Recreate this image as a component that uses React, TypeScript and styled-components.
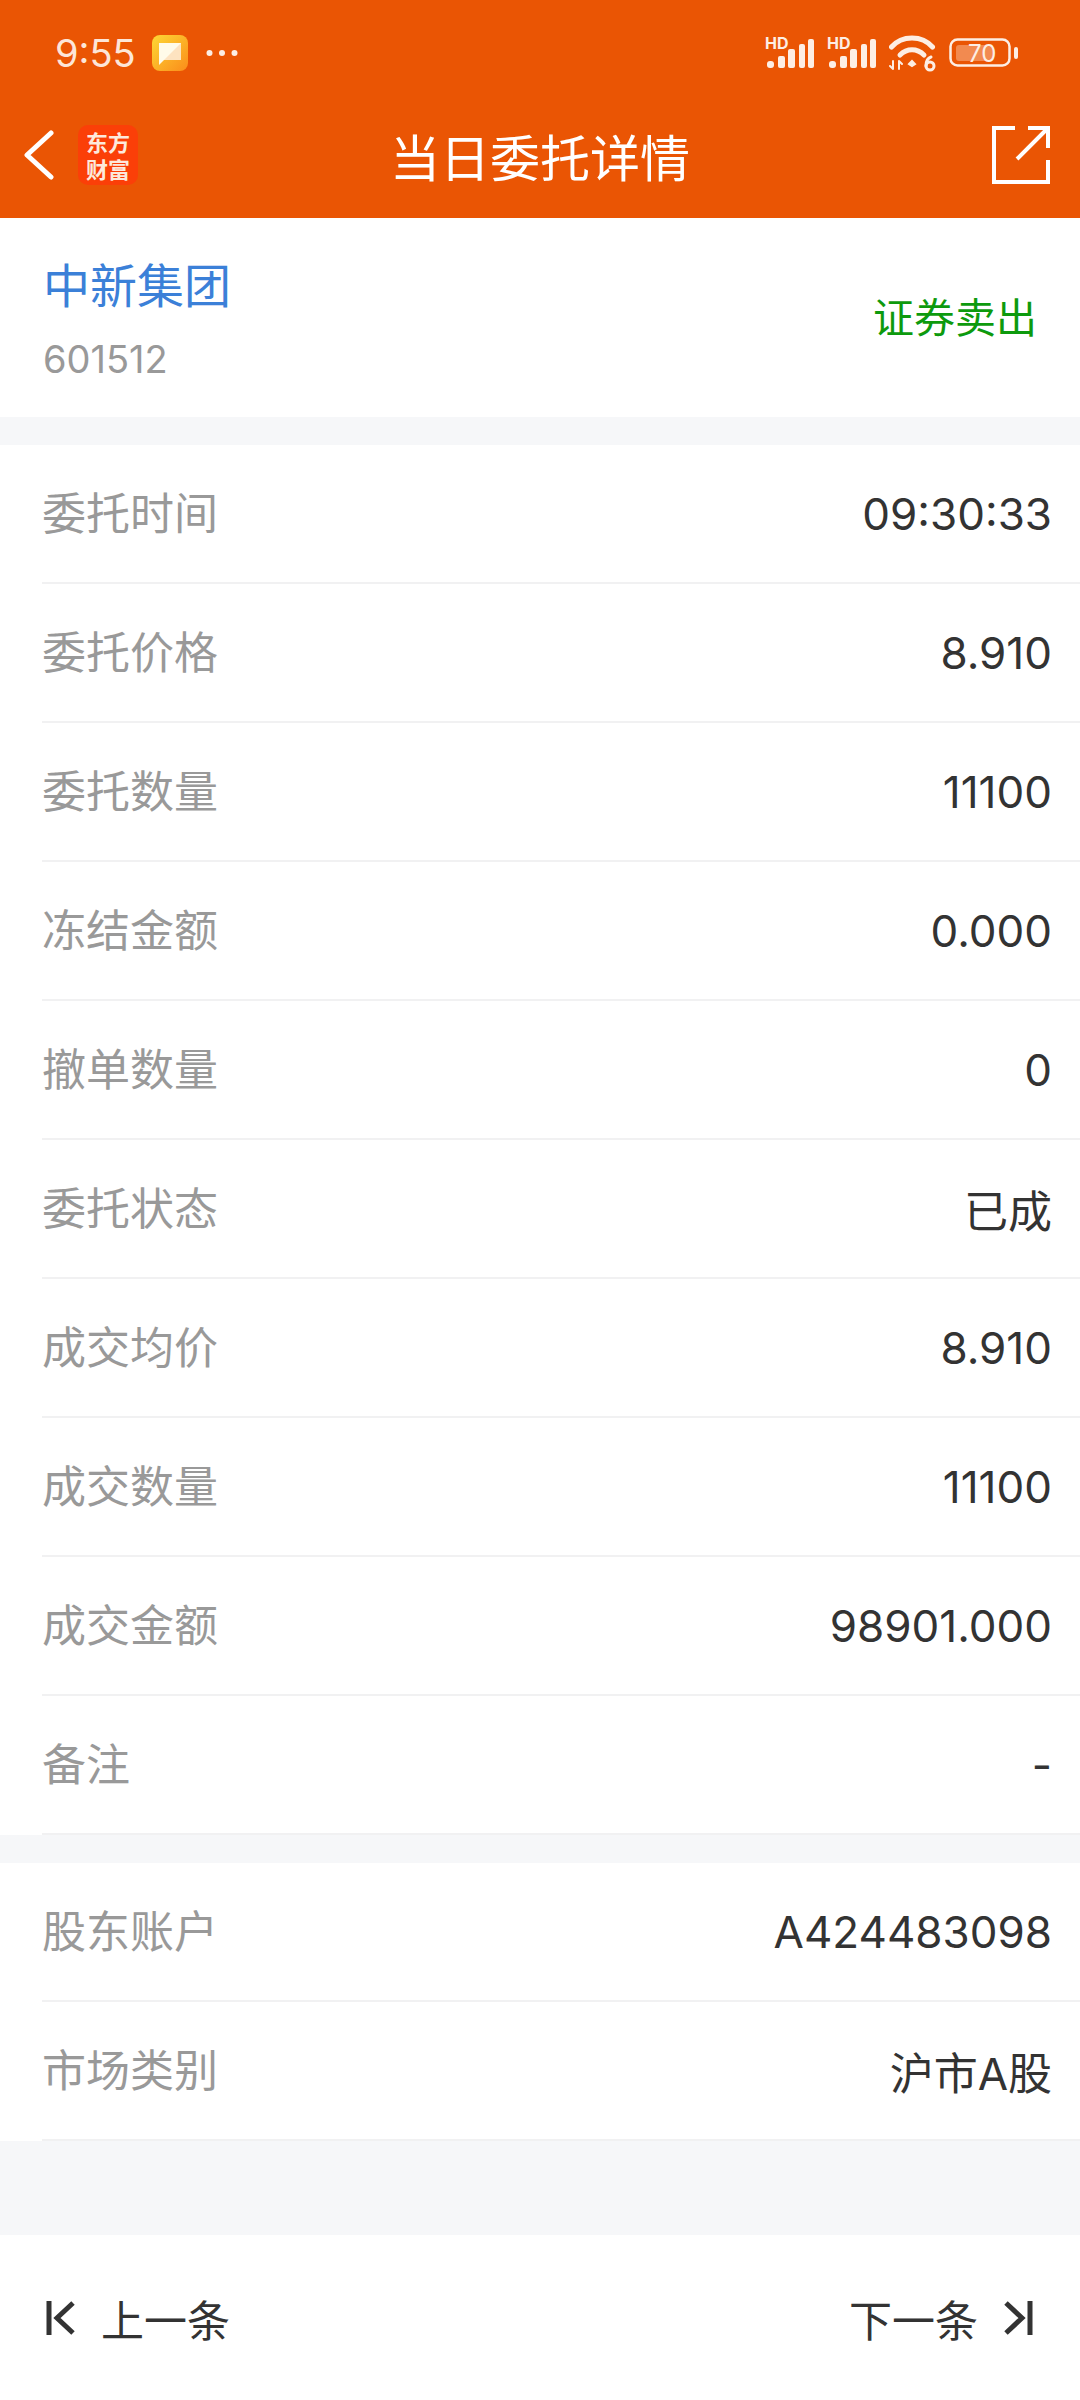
import styled, { createGlobalStyle } from 'styled-components';

const GlobalStyle = createGlobalStyle`
  html, body { margin: 0; padding: 0; background: #f6f7f9; }
  body { font-family: Inter, "Noto Sans CJK SC", sans-serif; }
`;

const Page = styled.div`
  width: 1080px;
  height: 2400px;
  display: flex;
  flex-direction: column;
  background: #f6f7f9;
  overflow: hidden;
`;

const Header = styled.header`
  height: 218px;
  background: #ea5504;
  display: flex;
  flex-direction: column;
  flex-shrink: 0;
`;

const StatusBar = styled.div`
  height: 106px;
  display: flex;
  align-items: center;
  justify-content: space-between;
  padding: 0 62px 0 55px;
`;

const StatusLeft = styled.div`
  display: flex;
  align-items: center;
`;

const Clock = styled.span`
  font-family: Inter, sans-serif;
  font-size: 38px;
  width: 97px;
  color: #fde6d8;
`;

const NotifyIcon = styled.svg`
  width: 36px;
  height: 36px;
`;

const MoreDots = styled.svg`
  width: 32px;
  height: 8px;
  margin-left: 18px;
`;

const StatusRight = styled.div`
  display: flex;
  align-items: center;
  gap: 12px;
`;

const NavBar = styled.div`
  height: 98px;
  display: flex;
  align-items: center;
  justify-content: space-between;
  padding: 0 30px 0 24px;
  position: relative;
`;

const NavLeft = styled.div`
  display: flex;
  align-items: center;
  gap: 24px;
`;

const LogoBadge = styled.div`
  width: 60px;
  height: 60px;
  border-radius: 10px;
  background: #fb3f08;
  color: #fde9dc;
  font-family: "Noto Sans CJK SC", sans-serif;
  font-size: 22px;
  font-weight: 700;
  line-height: 27px;
  display: flex;
  align-items: center;
  justify-content: center;
  text-align: center;
`;

const Title = styled.h1`
  position: absolute;
  left: 0;
  right: 0;
  margin: 0;
  text-align: center;
  font-family: "Noto Sans CJK SC", sans-serif;
  font-size: 50px;
  font-weight: 400;
  color: #fff;
  pointer-events: none;
`;

const Summary = styled.section`
  height: 199px;
  background: #fff;
  display: flex;
  justify-content: space-between;
  align-items: center;
  padding: 0 43px;
  margin-bottom: 28px;
  flex-shrink: 0;
`;

const StockName = styled.div`
  font-family: "Noto Sans CJK SC", sans-serif;
  font-size: 47px;
  line-height: 64px;
  color: #3b80d8;
`;

const StockCode = styled.div`
  font-size: 38px;
  line-height: 50px;
  margin-top: 19px;
  color: #999;
`;

const Direction = styled.div`
  font-family: "Noto Sans CJK SC", sans-serif;
  font-size: 41px;
  color: #0d9a0d;
  padding-bottom: 6px;
`;

const Group = styled.section`
  background: #fff;
  margin-bottom: 28px;
  flex-shrink: 0;
`;

const Row = styled.div`
  height: 139px;
  box-sizing: border-box;
  margin-left: 42px;
  padding-right: 28px;
  border-bottom: 2px solid #f1f1f2;
  display: flex;
  align-items: center;
  justify-content: space-between;
`;

const Label = styled.span`
  font-family: "Noto Sans CJK SC", sans-serif;
  font-size: 44px;
  color: #999;
  padding-bottom: 5px;
`;

const Value = styled.span`
  font-family: Inter, "Noto Sans CJK SC", sans-serif;
  font-size: 44px;
  color: #333;
`;

const Footer = styled.footer`
  margin-top: auto;
  height: 165px;
  background: #fff;
  display: flex;
  align-items: center;
  justify-content: space-between;
  padding: 0 47px 0 46px;
  flex-shrink: 0;
`;

const PagerButton = styled.div`
  display: flex;
  align-items: center;
  gap: 25px;
  font-family: "Noto Sans CJK SC", sans-serif;
  font-size: 43px;
  color: #333;
`;

const PagerIcon = styled.svg`
  width: 30px;
  height: 34px;
  fill: none;
  stroke: #333;
  stroke-width: 5;
`;

const orderRows = [
  ['委托时间', '09:30:33'],
  ['委托价格', '8.910'],
  ['委托数量', '11100'],
  ['冻结金额', '0.000'],
  ['撤单数量', '0'],
  ['委托状态', '已成'],
  ['成交均价', '8.910'],
  ['成交数量', '11100'],
  ['成交金额', '98901.000'],
  ['备注', '-'],
];

const accountRows = [
  ['股东账户', 'A424483098'],
  ['市场类别', '沪市A股'],
];

function SignalIcon() {
  return (
    <svg width="50" height="32" viewBox="0 0 50 32" fill="#fdeee4">
      <text x="0" y="12" fontSize="16" fontWeight="700" fontFamily="Inter, sans-serif">HD</text>
      <rect x="2" y="24" width="7" height="7" rx="3" />
      <rect x="13" y="19" width="7" height="12" rx="2" />
      <rect x="23" y="12" width="7" height="19" rx="2" />
      <rect x="34" y="7" width="6" height="24" rx="2" />
      <rect x="43" y="2" width="6" height="29" rx="2" />
    </svg>
  );
}

function WifiIcon() {
  return (
    <svg width="48" height="37" viewBox="0 0 48 37" fill="none" stroke="#fdeee4" strokeLinecap="round">
      <path d="M2.5 12 C13 0 33 0 43.5 12" strokeWidth="5" />
      <path d="M11 20 C18 13 28 13 35 20" strokeWidth="5" />
      <path d="M20 29 L23 26 L26 29 L23 31 Z" fill="#fdeee4" strokeWidth="2" />
      <path d="M4 26 V34 M1 31 L4 34 M10 34 V26 M13 29 L10 26" strokeWidth="2" />
      <circle cx="41" cy="31" r="4" strokeWidth="3" />
      <path d="M37 31 C37 26 39 23 42 22" strokeWidth="3" />
    </svg>
  );
}

function BatteryIcon() {
  return (
    <svg width="69" height="30" viewBox="0 0 69 30">
      <rect x="1.5" y="1.5" width="59" height="26" rx="7" fill="none" stroke="#fdeee4" strokeWidth="2.5" />
      <rect x="7" y="7" width="37" height="16" rx="3" fill="#f28a50" />
      <rect x="65" y="9" width="4" height="12" rx="2" fill="#fdeee4" />
      <text x="19" y="24" fontSize="24" fontFamily="Inter, sans-serif" fill="#fdeee4">70</text>
    </svg>
  );
}

export default function App() {
  return (
    <Page>
      <GlobalStyle />
      <Header>
        <StatusBar>
          <StatusLeft>
            <Clock>9:55</Clock>
            <NotifyIcon viewBox="0 0 36 36">
              <defs>
                <linearGradient id="notify" x1="0" y1="0" x2="1" y2="1">
                  <stop offset="0" stopColor="#fdd835" />
                  <stop offset="1" stopColor="#fb8c1a" />
                </linearGradient>
              </defs>
              <rect width="36" height="36" rx="8" fill="url(#notify)" />
              <path d="M7 8 H29 V25 H7 Z" fill="#fde3c0" />
              <path d="M7 8 H29 L7 30 Z" fill="#fffbe9" />
            </NotifyIcon>
            <MoreDots viewBox="0 0 32 8" fill="#fdeee4">
              <circle cx="3.5" cy="4" r="3" />
              <circle cx="16" cy="4" r="3" />
              <circle cx="28.5" cy="4" r="3" />
            </MoreDots>
          </StatusLeft>
          <StatusRight>
            <SignalIcon />
            <SignalIcon />
            <WifiIcon />
            <BatteryIcon />
          </StatusRight>
        </StatusBar>
        <NavBar>
          <Title>当日委托详情</Title>
          <NavLeft>
            <svg width="30" height="50" viewBox="0 0 30 50" fill="none" stroke="#fff" strokeWidth="5" strokeLinecap="round" strokeLinejoin="round">
              <path d="M27 3 L3 25 L27 47" />
            </svg>
            <LogoBadge>东方<br />财富</LogoBadge>
          </NavLeft>
          <svg width="58" height="58" viewBox="0 0 58 58" fill="none" stroke="#fff" strokeWidth="4">
            <path d="M23 2 H2 V56 H56 V34" />
            <path d="M25 33 L56 2 M36 2 H56 V22" />
          </svg>
        </NavBar>
      </Header>
      <Summary>
        <div>
          <StockName>中新集团</StockName>
          <StockCode>601512</StockCode>
        </div>
        <Direction>证券卖出</Direction>
      </Summary>
      <Group>
        {orderRows.map(([label, value]) => (
          <Row key={label}>
            <Label>{label}</Label>
            <Value>{value}</Value>
          </Row>
        ))}
      </Group>
      <Group>
        {accountRows.map(([label, value]) => (
          <Row key={label}>
            <Label>{label}</Label>
            <Value>{value}</Value>
          </Row>
        ))}
      </Group>
      <Footer>
        <PagerButton>
          <PagerIcon viewBox="0 0 30 34">
            <path d="M3 0 V34 M27 2 L11 17 L27 32" />
          </PagerIcon>
          上一条
        </PagerButton>
        <PagerButton>
          下一条
          <PagerIcon viewBox="0 0 30 34">
            <path d="M27 0 V34 M3 2 L19 17 L3 32" />
          </PagerIcon>
        </PagerButton>
      </Footer>
    </Page>
  );
}
